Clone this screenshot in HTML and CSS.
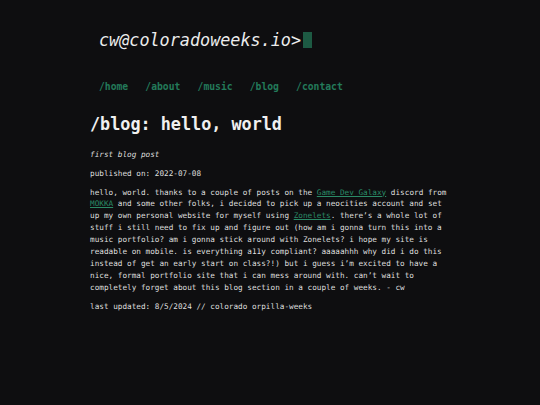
FILE: index.html
```html
<!DOCTYPE html>
<html lang="en">
<head>
<meta charset="utf-8">
<title>cw@coloradoweeks.io</title>
<link rel="stylesheet" href="styles.css">
</head>
<body>
<div class="page">
  <header class="site-header">
    <div class="prompt"><span class="prompt-text">cw@coloradoweeks.io&gt;</span><span class="cursor"></span></div>
    <nav class="nav">
      <a href="#">/home</a>
      <a href="#">/about</a>
      <a href="#">/music</a>
      <a href="#">/blog</a>
      <a href="#">/contact</a>
    </nav>
  </header>
  <main class="post">
    <h1 class="post-title">/blog: hello, world</h1>
    <p class="subtitle">first blog post</p>
    <p>published on: 2022-07-08</p>
    <p>hello, world. thanks to a couple of posts on the <a href="#">Game Dev Galaxy</a> discord from <a href="#">MOKKA</a> and some other folks, i decided to pick up a neocities account and set up my own personal website for myself using <a href="#">Zonelets</a>. there’s a whole lot of stuff i still need to fix up and figure out (how am i gonna turn this into a music portfolio? am i gonna stick around with Zonelets? i hope my site is readable on mobile. is everything a11y compliant? aaaaahhh why did i do this instead of get an early start on class?!) but i guess i’m excited to have a nice, formal portfolio site that i can mess around with. can’t wait to completely forget about this blog section in a couple of weeks. - cw</p>
    <p>last updated: 8/5/2024 // colorado orpilla-weeks</p>
  </main>
</div>
</body>
</html>
```

FILE: styles.css
```css
html, body {
  margin: 0;
  padding: 0;
  background: #0e0e10;
}

body {
  font-family: "DejaVu Sans Mono", "Liberation Mono", monospace;
  color: #dedede;
  min-height: 405px;
}

.page {
  width: 360px;
  margin: 0 auto;
  padding-top: 30px;
}

.site-header {
  padding-left: 9px;
}

.prompt {
  display: flex;
  align-items: center;
  height: 20px;
}

.prompt-text {
  font-size: 16.8px;
  line-height: 20px;
  font-style: oblique;
  color: #ececec;
}

.cursor {
  display: inline-block;
  width: 8.5px;
  height: 16.4px;
  margin-left: 2px;
  background: #1d5a43;
}

.nav {
  display: flex;
  gap: 17.2px;
  margin-top: 31px;
}

.nav a {
  font-size: 9.7px;
  line-height: 12px;
  font-weight: bold;
  color: #237a5a;
  text-decoration: none;
}

.post {
  margin-top: 20.5px;
}

.post-title {
  font-size: 16.8px;
  line-height: 20px;
  font-weight: bold;
  color: #f0f0f0;
  margin: 0 0 15px 0;
}

.post p {
  font-size: 7.7px;
  line-height: 11.9px;
  margin: 0 0 7.1px 0;
}

.post .subtitle {
  font-style: oblique;
}

.post p a {
  color: #2a8a66;
  text-decoration: underline;
}
```
